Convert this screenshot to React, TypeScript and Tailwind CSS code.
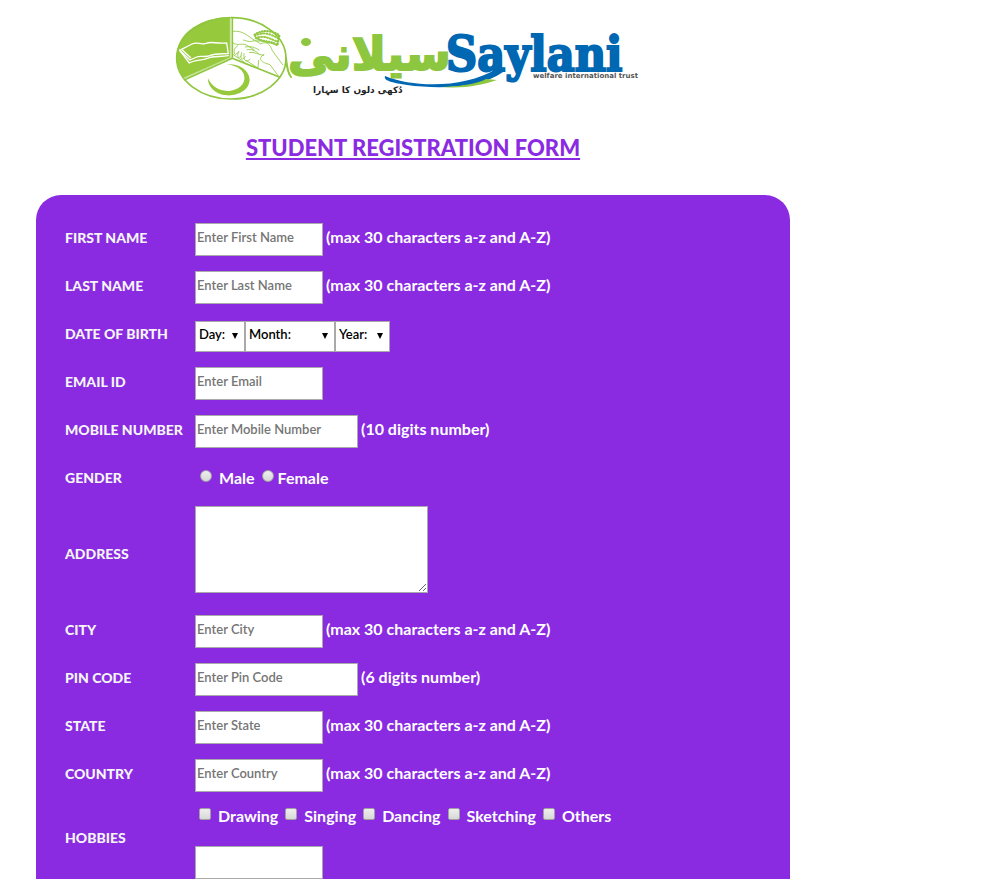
import type { ReactNode } from "react";

function Logo() {
  return (
    <svg viewBox="0 0 486 95" className="h-[95px] w-[486px]" role="img" aria-label="Saylani Welfare International Trust">
      <g transform="scale(0.3333)" fill="none" strokeLinecap="round" strokeLinejoin="round">
        <path d="M182 145 42 206C0 145 20 85 70 52 105 30 145 22 182 22Z" fill="#97c93d" />
        <ellipse cx="184" cy="145" rx="164" ry="122" stroke="#8fc63f" strokeWidth="5" />
        <path d="M187 24V145L328 201M187 145 44 209" stroke="#8fc63f" strokeWidth="5" />
        <path d="M181 24V143L42 204" stroke="#e6f3d0" strokeWidth="2" />
        <g stroke="#fff" strokeWidth="4">
          <path d="M29 121 66 102C84 94 90 106 108 100 126 93 136 102 170 99L175 131C150 132 137 130 120 137 103 143 92 136 80 141L60 150Z" />
          <path d="M29 121 58 159C77 148 96 153 112 145 132 136 150 142 175 137M37 120 62 143" />
        </g>
        <path d="M170 163C205 160 236 178 239 208 239 240 205 258 170 256 136 254 112 230 114 205 126 232 153 246 182 242 214 237 228 215 222 194 216 176 195 166 170 163Z" fill="#97c93d" />
        <g stroke="#8fc63f" strokeWidth="2.5">
          <path d="M189 64C207 62 221 68 232 76L252 90C247 98 232 94 220 90M189 99C205 109 215 98 229 105L252 119M203 107C189 117 191 128 196 134L207 125M206 126C199 140 204 148 214 138M215 128C209 145 214 155 226 140M222 131C220 152 228 159 240 148" />
          <path d="M252 93 275 93 323 105M254 90 272 102C290 92 301 104 307 122L338 164M226 111C244 108 252 111 267 120M231 119C246 116 260 124 266 132M238 127C255 125 263 134 281 136M282 133C260 148 275 157 300 164L326 199M228 151 264 174 266 151M190 134 225 158" />
        </g>
        <path d="M254 74C278 58 306 61 328 76L322 106C303 91 281 98 258 84Z" stroke="#8fc63f" strokeWidth="7" strokeDasharray="1 7" />
        <path d="M262 74C286 66 304 73 322 84M264 82C286 77 300 86 320 94" stroke="#97c93d" strokeWidth="6" strokeDasharray="3 6" />
      </g>
      <path d="M116 48C117 56 117 62 121 67" fill="none" stroke="#8dc63f" strokeWidth="2" strokeLinecap="round" />
      <ellipse cx="136" cy="32" rx="5" ry="4" fill="#8dc63f" />
      <text x="118" y="60" fontSize="46" fontWeight="700" fill="#8dc63f" stroke="#8dc63f" strokeWidth="2" className="font-['DejaVu_Sans',sans-serif]">
        سیلانی
      </text>
      <path d="M215 66C244 78 296 78 326 59L333 62C309 79 267 79 237 75 224 73 213 71 215 66Z" fill="#0067b3" />
      <path d="M273 77C295 76 309 73 316 69L327 70C312 75 293 79 273 77Z" fill="#8dc63f" />
      <text x="276" y="61" fontSize="48" fontWeight="700" fill="#0067b3" stroke="#0067b3" strokeWidth="2" className="font-['DejaVu_Serif_Condensed','DejaVu_Serif',serif]">
        Saylani
      </text>
      <text x="363" y="68" fontSize="7" fontWeight="700" fill="#555" className="font-['DejaVu_Sans',sans-serif]">
        welfare international trust
      </text>
      <text x="143" y="83" fontSize="9" fontWeight="700" fill="#222" className="font-['DejaVu_Sans',sans-serif]">
        دُکھی دلوں کا سہارا
      </text>
    </svg>
  );
}

const control =
  "h-[33px] border border-[#a9a9a9] bg-white px-px pb-[5px] text-[13px] font-semibold text-black placeholder:text-[#757575]";

function Row({ label, id, tall, children }: { label: string; id?: string; tall?: string; children: ReactNode }) {
  return (
    <div className={`flex ${tall ?? "h-12"}`}>
      <div className="flex w-[130px] shrink-0 items-center pb-[3px] text-[14px] font-black whitespace-nowrap text-[#f5f5f5]">
        {id ? <label htmlFor={id}>{label}</label> : <span>{label}</span>}
      </div>
      {children}
    </div>
  );
}

function TextRow({ label, id, hint, wide }: { label: string; id: string; hint?: string; wide?: boolean }) {
  const name = id === "email" ? "Enter Email" : "Enter " + label.split(" ").map((w) => w[0] + w.slice(1).toLowerCase()).join(" ");
  return (
    <Row label={label} id={id}>
      <div className="flex items-center gap-[3px] pt-px">
        <input id={id} type="text" placeholder={name} className={`${control} ${wide ? "w-[163px]" : "w-32"}`} />
        {hint && <span className="pb-1.5 text-[16px] leading-6 font-bold whitespace-nowrap text-white">{hint}</span>}
      </div>
    </Row>
  );
}

function DateSelect({ label, width }: { label: string; width: string }) {
  return (
    <div className={`relative ${width}`}>
      <select aria-label={label} className="h-[31px] w-full appearance-none border border-[#a9a9a9] bg-white pb-1 pl-[3px] text-[13px] font-semibold text-black">
        <option>{label}:</option>
      </select>
      <svg viewBox="0 0 6 6" className="pointer-events-none absolute top-3 right-[7px] size-[6px]">
        <path d="M0 0H6L3 6Z" />
      </svg>
    </div>
  );
}

const tick = "size-3 shrink-0 appearance-none border border-[#a0a0a0] bg-linear-to-b from-[#eee] to-[#d8d8d8]";
const choiceText = "text-[16px] leading-5 font-bold text-white";
const letters = "(max 30 characters a-z and A-Z)";

export default function App() {
  return (
    <main className="w-full max-w-[826px] px-9 pt-[10px] font-['Lato','Noto_Sans',sans-serif]">
      <header className="flex flex-col items-center">
        <Logo />
        <h1 className="mt-[29px] text-[22px] leading-7 font-black text-[#8a2be2] underline decoration-2 underline-offset-2">
          STUDENT REGISTRATION FORM
        </h1>
      </header>
      <form className="mt-[33px] rounded-t-[25px] bg-[#8a2be2] pt-5 pl-[29px]">
        <TextRow label="FIRST NAME" id="first" hint={letters} />
        <TextRow label="LAST NAME" id="last" hint={letters} />
        <Row label="DATE OF BIRTH">
          <div className="flex items-center pt-[3px]">
            <DateSelect label="Day" width="w-[50px]" />
            <DateSelect label="Month" width="w-[90px]" />
            <DateSelect label="Year" width="w-[55px]" />
          </div>
        </Row>
        <TextRow label="EMAIL ID" id="email" />
        <TextRow label="MOBILE NUMBER" id="mobile" hint="(10 digits number)" wide />
        <Row label="GENDER">
          <div className="flex items-center gap-[7px] pb-[3px] pl-[5px]">
            <label className={`flex items-center gap-[7px] ${choiceText}`}>
              <input type="radio" name="gender" className={`${tick} mb-1 rounded-full`} />
              Male
            </label>
            <label className={`flex items-center gap-1 ${choiceText}`}>
              <input type="radio" name="gender" className={`${tick} mb-1 rounded-full`} />
              Female
            </label>
          </div>
        </Row>
        <Row label="ADDRESS" id="address" tall="h-[104px]">
          <textarea id="address" className="mt-[3px] h-[87px] w-[233px] resize border border-[#a9a9a9] bg-white p-0.5 text-[13px] text-black" />
        </Row>
        <TextRow label="CITY" id="city" hint={letters} />
        <TextRow label="PIN CODE" id="pin" hint="(6 digits number)" wide />
        <TextRow label="STATE" id="state" hint={letters} />
        <TextRow label="COUNTRY" id="country" hint={letters} />
        <Row label="HOBBIES" tall="h-20">
          <div className="flex flex-col justify-between pt-[7px]">
            <div className="flex gap-[7px] pl-1">
              {["Drawing", "Singing", "Dancing", "Sketching", "Others"].map((hobby) => (
                <label key={hobby} className={`flex items-center gap-[7px] ${choiceText}`}>
                  <input type="checkbox" className={`${tick} mb-1 rounded-[2px]`} />
                  {hobby}
                </label>
              ))}
            </div>
            <input aria-label="Other hobby" type="text" className={`${control} w-32`} />
          </div>
        </Row>
      </form>
    </main>
  );
}
